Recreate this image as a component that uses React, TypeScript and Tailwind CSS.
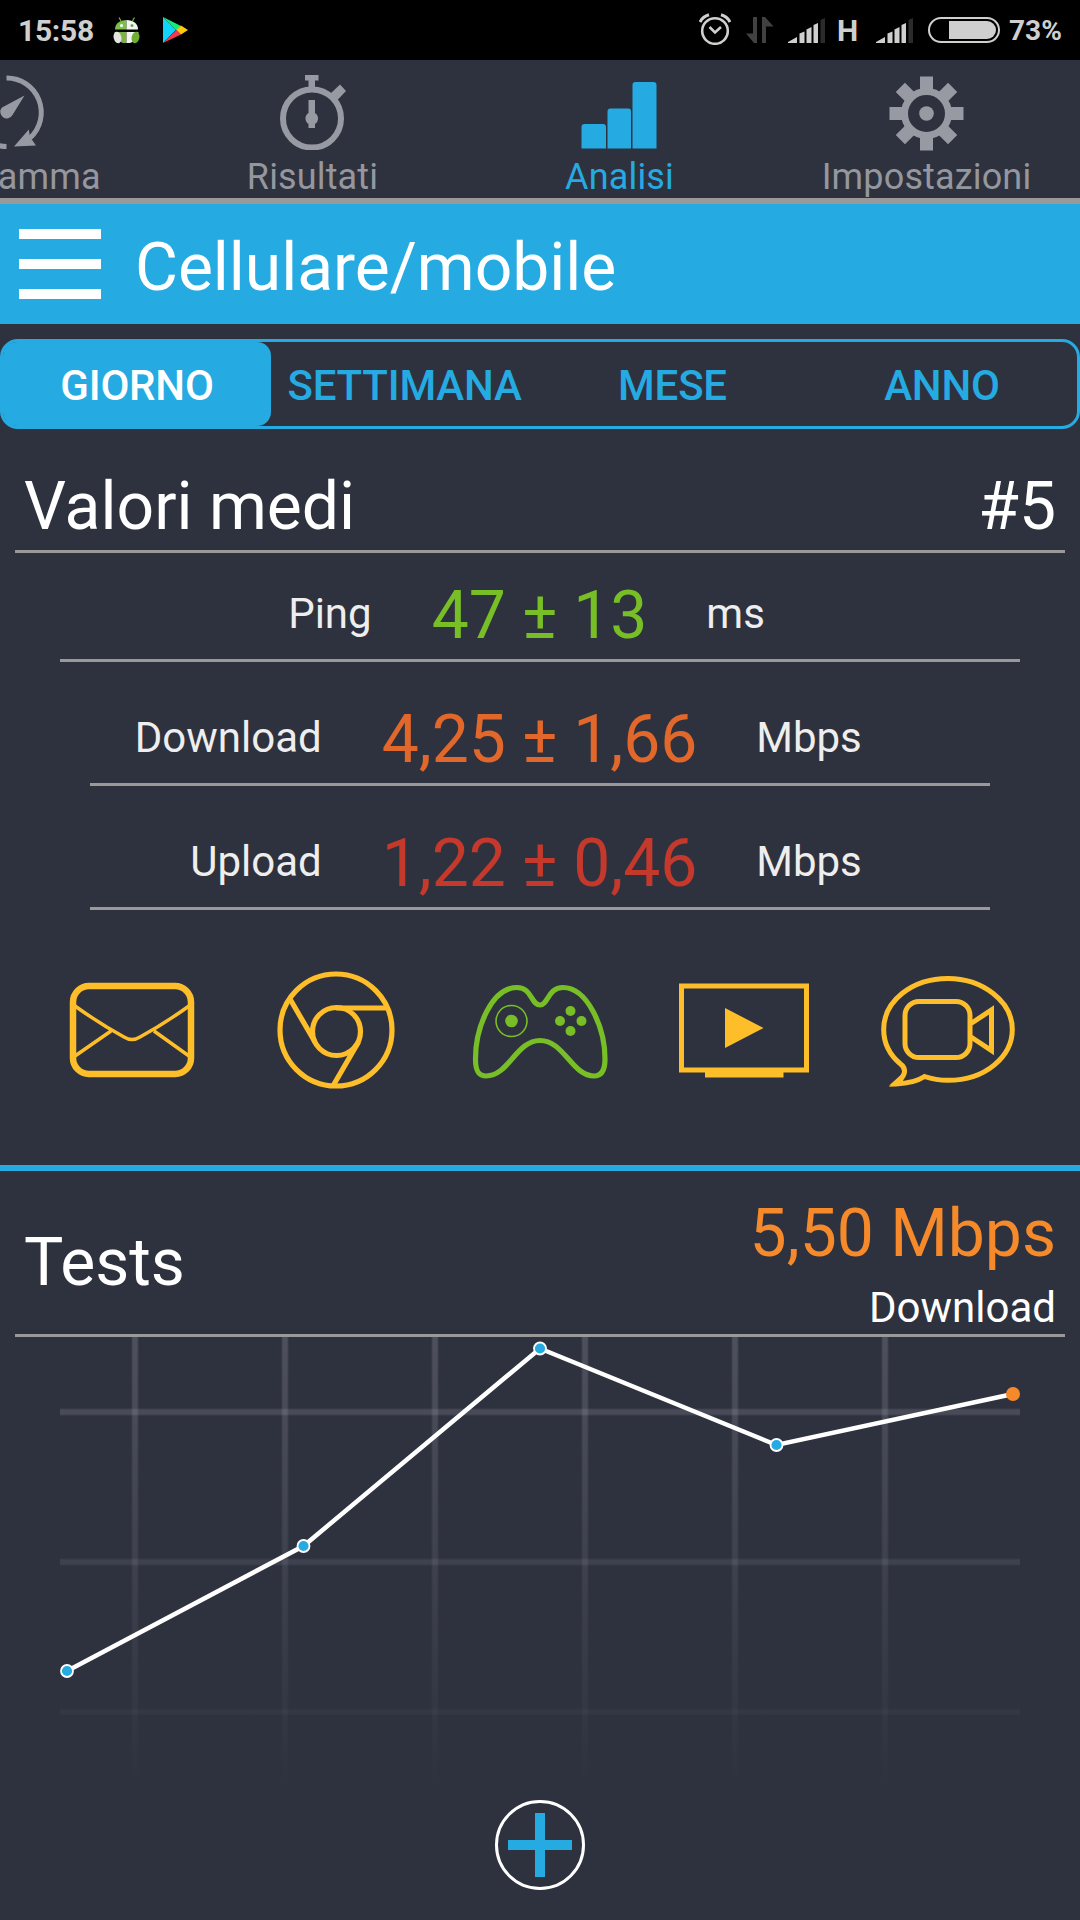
import type { ReactNode } from "react";

const seriesPoints = [
  { x: 67, y: 334 },
  { x: 303.5, y: 209 },
  { x: 540, y: 11.5 },
  { x: 776.5, y: 108 },
  { x: 1013, y: 57 },
];

function SignalIcon() {
  return (
    <svg viewBox="0 0 38 26" className="h-[26px] w-[38px]" fill="#cfcfcf">
      <path d="M0 25V24L9 19V25Z" />
      <path d="M11.5 15.5L16.5 13.5V25H11.5Z" />
      <path d="M18.5 11.5L23.5 9V25H18.5Z" />
      <path d="M25.5 7L30 5V25H25.5Z" />
      <path d="M32.5 2L37 0V25H32.5Z" fill="#2b2b2b" />
    </svg>
  );
}

function StatusBar() {
  return (
    <header className="flex h-[60px] items-start justify-between bg-black text-[#cfcfcf]">
      <div className="flex items-start pl-[18px]">
        <span className="w-[95px] pt-[13px] text-[30px] leading-[35px] font-bold tracking-[-0.3px]">15:58</span>
        <svg viewBox="0 0 27 27" className="mt-[17px] h-[27px] w-[27px]">
          <path d="M8 4L6 0.5M19.5 4L21.5 0.5" stroke="#7cb342" strokeWidth="1.2" />
          <path d="M2 12.5C2 6.5 7 3 13.5 3V12.5Z" fill="#7cc04b" />
          <path d="M25 12.5C25 6.5 20 3 13.5 3V12.5Z" fill="#f4f4f4" />
          <path d="M1.5 15H13.5V26H11C6 25.5 4 22 1.5 15Z" fill="#7cb342" />
          <path d="M25.500 15H13.5V26H16C21 25.5 23 22 25.500 15Z" fill="#f4f4f4" />
          <ellipse cx="4.5" cy="20.5" rx="3.8" ry="5.8" fill="#e4e4e4" transform="rotate(-14 4.5 20.5)" />
          <ellipse cx="22.5" cy="20.5" rx="3.8" ry="5.8" fill="#6fae35" transform="rotate(14 22.5 20.5)" />
          <circle cx="8.5" cy="8.5" r="1.5" fill="#fff" />
          <circle cx="19" cy="8.5" r="1.5" fill="#6fae35" />
        </svg>
        <svg viewBox="0 0 25 27" className="mt-[17px] ml-[23px] h-[27px] w-[25px]">
          <path d="M0 0V26L13 13Z" fill="#14d3fa" />
          <path d="M0 0L18 9L13.5 13.5Z" fill="#14ee78" />
          <path d="M0 26L18 17.5L13.5 13Z" fill="#f53a50" />
          <path d="M18 8.5L25 13L18 17.5L13.5 13Z" fill="#ffc90e" />
        </svg>
      </div>
      <div className="flex items-start pr-[18px]">
        <svg viewBox="0 0 32 32" className="mt-[13px] mr-[1px] h-[32px] w-[32px]" fill="none" stroke="#cfcfcf">
          <circle cx="16" cy="18" r="12.8" strokeWidth="2.6" />
          <path d="M10.5 14L16 19.5L22 14" strokeWidth="2.5" />
          <path d="M1 9C3 5 6 3 10 1.8M31 9C29 5 26 3 22 1.8" strokeWidth="3" />
        </svg>
        <svg viewBox="0 0 28 26" className="mt-[17px] ml-[14px] h-[26px] w-[28px]" fill="#414141">
          <path d="M11 0V26H8L0 16.5H7V0Z" />
          <path d="M16 26V0H19L27.5 9.5H20V26Z" />
        </svg>
        <div className="mt-[18px] ml-[14px]">
          <SignalIcon />
        </div>
        <span className="ml-[11px] w-[21px] pt-[13px] text-[30px] leading-[35px] font-bold">H</span>
        <div className="mt-[18px] ml-[18px]">
          <SignalIcon />
        </div>
        <svg viewBox="0 0 72 26" className="mt-[17px] ml-[14px] h-[26px] w-[72px]">
          <rect x="1" y="1" width="70" height="24" rx="12" fill="none" stroke="#cfcfcf" strokeWidth="2" />
          <path d="M21 4H59A9 9 0 0 1 59 22H21Z" fill="#cfcfcf" />
        </svg>
        <span className="ml-[9px] w-[53px] pt-[13px] text-[28px] leading-[35px] font-bold">73%</span>
      </div>
    </header>
  );
}

function GaugeIcon() {
  return (
    <svg viewBox="0 0 80 76" className="h-[76px] w-[80px]" fill="none" stroke="#979aa3">
      <path d="M40.5 3A34.5 34.5 0 0 1 64 63" strokeWidth="5" />
      <path d="M28 69Q34 71.5 40.5 71.5" strokeWidth="5" />
      <path d="M48 71.5L62.8 54.5L64 62L70 70.5Z" fill="#979aa3" stroke="none" />
      <path d="M58.5 20.5L46.5 40A6.5 6.5 0 1 1 36 32.5Z" fill="#979aa3" stroke="none" />
    </svg>
  );
}

function StopwatchIcon() {
  return (
    <svg viewBox="0 0 66 75" className="h-[75px] w-[66px]" fill="#979aa3">
      <circle cx="32" cy="43.5" r="29" fill="none" stroke="#979aa3" strokeWidth="6" />
      <path d="M25 0H38.5V5.5H35V14H28.5V5.5H25Z" />
      <path d="M50 19L60 9.5L66 16L56.5 26Z" />
      <path d="M28.5 25H35V38A6.5 6.5 0 0 1 35 49V53H28.5V49A6.5 6.5 0 0 1 28.5 38Z" />
    </svg>
  );
}

function BarsIcon() {
  return (
    <svg viewBox="0 0 76 68" className="h-[68px] w-[76px]" fill="#25aae2">
      <path d="M0.5 67.5V46Q0.5 43 3.5 43H22Q25 43 25 46V67.5Z" />
      <path d="M26.5 67.5V30.5Q26.5 27.5 29.5 27.5H47.5Q50 27.5 50 30.5V67.5Z" />
      <path d="M51.5 67.5V4Q51.5 1 54.5 1H72.5Q75.5 1 75.5 4V67.5Z" />
    </svg>
  );
}

function GearIcon() {
  return (
    <svg viewBox="-37.5 -37.5 75 75" className="mt-[1px] h-[75px] w-[75px]" fill="#979aa3">
      {[0, 45, 90, 135].map((angle) => (
        <g key={angle} transform={`rotate(${angle})`}>
          <rect x="-6.5" y="-37" width="13" height="15" />
          <rect x="-6.5" y="22" width="13" height="15" />
        </g>
      ))}
      <circle r="22" fill="none" stroke="#979aa3" strokeWidth="7" />
      <circle r="7.3" />
    </svg>
  );
}

function Tab({ label, active, children }: { label: string; active?: boolean; children: ReactNode }) {
  return (
    <div className="flex w-[307px] shrink-0 flex-col items-center pt-[15px]">
      <div className="flex h-[76px] items-start justify-center">{children}</div>
      <span
        className={`mt-[5px] text-[36px] leading-[42px] tracking-[0.15px] ${active ? "text-[#25aae2]" : "text-[#95979f]"}`}
      >
        {label}
      </span>
    </div>
  );
}

function TabBar() {
  return (
    <nav className="flex h-[144px] overflow-hidden border-b-[6px] border-[#999]">
      <div className="-ml-[148px] flex">
        <Tab label="Programma">
          <GaugeIcon />
        </Tab>
        <Tab label="Risultati">
          <StopwatchIcon />
        </Tab>
        <Tab label="Analisi" active>
          <div className="pt-[6px] pr-[2px]">
            <BarsIcon />
          </div>
        </Tab>
        <Tab label="Impostazioni">
          <GearIcon />
        </Tab>
      </div>
    </nav>
  );
}

function PeriodSwitch() {
  return (
    <div className="mt-[15px] flex h-[90px] rounded-[18px] border-[3px] border-[#25aae2] text-[42px] leading-[88px] font-medium tracking-[-0.2px] text-[#25aae2]">
      <div className="h-[84px] w-[268px] rounded-[14px] bg-[#25aae2] text-center text-white">GIORNO</div>
      <div className="w-[267px] text-center">SETTIMANA</div>
      <div className="w-[269px] text-center">MESE</div>
      <div className="w-[270px] text-center">ANNO</div>
    </div>
  );
}

function MetricRow({
  label,
  value,
  unit,
  valueClassName,
  className,
}: {
  label: string;
  value: string;
  unit: string;
  valueClassName: string;
  className: string;
}) {
  return (
    <div
      className={`flex items-start border-b-[3px] border-[#999] pr-[2px] text-[42px] leading-[74px] text-[#eee] ${className}`}
    >
      <span className="flex-1 text-right">{label}</span>
      <span className={`mr-[59px] ml-[60px] text-[66px] leading-[78px] tracking-[-0.1px] ${valueClassName}`}>
        {value}
      </span>
      <span className="flex-1">{unit}</span>
    </div>
  );
}

function ServiceIcons() {
  return (
    <div className="flex h-[255px] items-start pt-[58px]">
      <svg viewBox="0 0 1080 130" className="h-[130px] w-[1080px]" fill="none" stroke="#fdbe2a">
        {/* mail */}
        <rect x="73" y="18" width="118" height="88" rx="16" strokeWidth="6.5" />
        <path d="M75 38Q100 56 124 69Q132 74 140 69Q164 56 189 38M75 88L111 63M189 88L154 63" strokeWidth="3.5" />
        {/* browser */}
        <circle cx="336" cy="62" r="56" strokeWidth="5.2" />
        <circle cx="336.5" cy="63.5" r="24" strokeWidth="5.2" />
        <path d="M336 40H386M290 31L315 74M358.5 74L333.5 117" strokeWidth="5.2" />
        {/* gaming */}
        <g stroke="#78be26">
          <path
            d="M540 37C531 37 532 19.5 517 19.5C492 19.5 475.5 59 475.5 91C475.5 104 479 108 486 108C509 108 516 72.5 540 72.5C564 72.5 572 108 594 108C602 108 605 102 605 91C605 59 587 19.5 563 19.5C548 19.5 548 37 540 37Z"
            strokeWidth="5.2"
          />
          <circle cx="511.5" cy="53" r="15.5" strokeWidth="1.6" />
          <g fill="#78be26" stroke="none">
            <circle cx="511.5" cy="53" r="6.3" />
            <circle cx="570.5" cy="43" r="5" />
            <circle cx="570.5" cy="63" r="5" />
            <circle cx="560" cy="53" r="5" />
            <circle cx="581.5" cy="53" r="5" />
          </g>
        </g>
        {/* streaming */}
        <rect x="681.5" y="18" width="125" height="84" strokeWidth="5" />
        <path d="M705 104H783.5V109.5H705Z M725 40V80L763.5 60Z" fill="#fdbe2a" stroke="none" />
        {/* video call */}
        <path
          d="M924.5 108.5C932 111 940 112.3 948 112.3C986 112.3 1012.3 88 1012.3 61.5C1012.3 33 982 10.5 948 10.5C912 10.5 883.7 33 883.7 61.5C883.7 75 890 87 900 95.5C909 102 903 110 896 116C908 115.5 917 113.5 924.5 108.5Z"
          strokeWidth="5"
        />
        <path d="M889 117.5L903 105V117Z" fill="#fdbe2a" stroke="none" />
        <rect x="905" y="33.5" width="65" height="56" rx="14" strokeWidth="5" />
        <path d="M971 55.5L991.5 42V82.5L971 69" strokeWidth="5" />
      </svg>
    </div>
  );
}

function TestsChart() {
  return (
    <svg viewBox="0 0 1080 450" className="block h-[450px] w-[1080px]">
      <defs>
        <linearGradient id="fade" x1="0" y1="0" x2="0" y2="450" gradientUnits="userSpaceOnUse">
          <stop offset="0" stopColor="#a6a6b2" stopOpacity="0.14" />
          <stop offset="1" stopColor="#a6a6b2" stopOpacity="0" />
        </linearGradient>
      </defs>
      {/* two stacked widths give every grid line a soft edge */}
      {[7, 5].map((w) => (
        <g key={w} fill="url(#fade)">
          {[135, 285, 435, 585, 735, 885].map((x) => (
            <rect key={x} x={x - w / 2} y="0" width={w} height="450" />
          ))}
          {[75, 225, 375].map((y) => (
            <rect key={y} x="60" y={y - w / 2} width="960" height={w} />
          ))}
        </g>
      ))}
      <polyline
        points={seriesPoints.map((p) => `${p.x},${p.y}`).join(" ")}
        fill="none"
        stroke="#fff"
        strokeWidth="4.5"
      />
      {seriesPoints.map((p, i) =>
        i === seriesPoints.length - 1 ? (
          <circle key={p.x} cx={p.x} cy={p.y} r="7" fill="#f68a2a" />
        ) : (
          <circle key={p.x} cx={p.x} cy={p.y} r="6" fill="#25aae2" stroke="#fff" strokeWidth="1.8" />
        ),
      )}
    </svg>
  );
}

export default function App() {
  return (
    <main className="flex h-[1920px] w-[1080px] flex-col overflow-hidden bg-[#2e323e] font-[Roboto,sans-serif] text-white">
      <StatusBar />
      <TabBar />
      <div className="flex h-[120px] items-center bg-[#25aae2] pl-[19px]">
        <div className="flex w-[82px] flex-col gap-[20px]">
          <div className="h-[10px] bg-white" />
          <div className="h-[10px] bg-white" />
          <div className="h-[10px] bg-white" />
        </div>
        <h1 className="pt-[8px] pl-[34px] text-[66px] leading-[78px] tracking-[-0.05px]">Cellulare/mobile</h1>
      </div>
      <PeriodSwitch />
      <section>
        <div className="mx-[15px] flex h-[124px] justify-between border-b-[3px] border-[#999] px-[9px] pt-[39px] text-[66px] leading-[78px]">
          <h2>Valori medi</h2>
          <span>#5</span>
        </div>
        <MetricRow
          label="Ping"
          value="47 ± 13"
          unit="ms"
          valueClassName="text-[#78be26]"
          className="mx-[60px] h-[109px] pt-[24px]"
        />
        <MetricRow
          label="Download"
          value="4,25 ± 1,66"
          unit="Mbps"
          valueClassName="text-[#e2672a]"
          className="mx-[90px] h-[124px] pt-[39px]"
        />
        <MetricRow
          label="Upload"
          value="1,22 ± 0,46"
          unit="Mbps"
          valueClassName="text-[#c4392b]"
          className="mx-[90px] h-[124px] pt-[39px]"
        />
        <ServiceIcons />
      </section>
      <section className="border-t-[6px] border-[#25aae2]">
        <div className="mx-[15px] flex h-[166px] justify-between border-b-[3px] border-[#999] px-[9px]">
          <h2 className="pt-[53px] text-[66px] leading-[78px]">Tests</h2>
          <div className="flex flex-col items-end pt-[24px]">
            <span className="text-[66px] leading-[78px] text-[#f68a2a]">5,50 Mbps</span>
            <span className="mt-[10px] text-[42px] leading-[50px]">Download</span>
          </div>
        </div>
        <TestsChart />
      </section>
      <button aria-label="Aggiungi" className="mx-auto mt-[13px] h-[90px] w-[90px]">
        <svg viewBox="0 0 90 90" className="h-[90px] w-[90px]">
          <circle cx="45" cy="45" r="43.5" fill="none" stroke="#fff" strokeWidth="3" />
          <path d="M13 45H77M45 13V77" stroke="#25aae2" strokeWidth="10" />
        </svg>
      </button>
    </main>
  );
}
